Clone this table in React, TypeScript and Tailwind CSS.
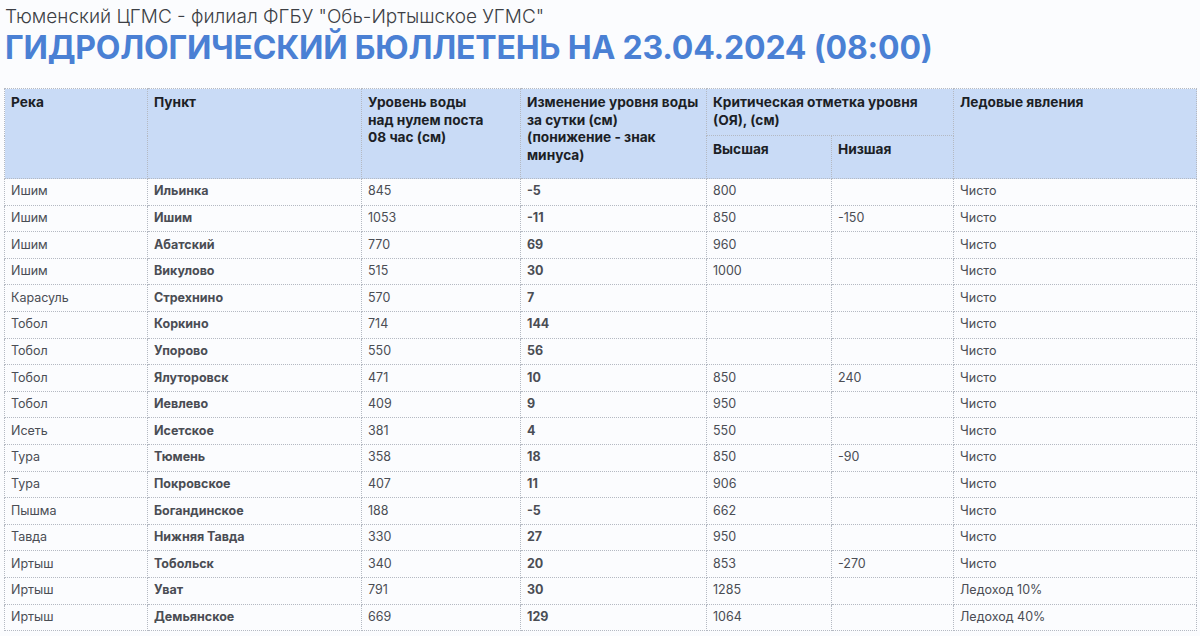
const rows: [string, string, string, string, string, string, string][] = [
  ["Ишим", "Ильинка", "845", "-5", "800", "", "Чисто"],
  ["Ишим", "Ишим", "1053", "-11", "850", "-150", "Чисто"],
  ["Ишим", "Абатский", "770", "69", "960", "", "Чисто"],
  ["Ишим", "Викулово", "515", "30", "1000", "", "Чисто"],
  ["Карасуль", "Стрехнино", "570", "7", "", "", "Чисто"],
  ["Тобол", "Коркино", "714", "144", "", "", "Чисто"],
  ["Тобол", "Упорово", "550", "56", "", "", "Чисто"],
  ["Тобол", "Ялуторовск", "471", "10", "850", "240", "Чисто"],
  ["Тобол", "Иевлево", "409", "9", "950", "", "Чисто"],
  ["Исеть", "Исетское", "381", "4", "550", "", "Чисто"],
  ["Тура", "Тюмень", "358", "18", "850", "-90", "Чисто"],
  ["Тура", "Покровское", "407", "11", "906", "", "Чисто"],
  ["Пышма", "Богандинское", "188", "-5", "662", "", "Чисто"],
  ["Тавда", "Нижняя Тавда", "330", "27", "950", "", "Чисто"],
  ["Иртыш", "Тобольск", "340", "20", "853", "-270", "Чисто"],
  ["Иртыш", "Уват", "791", "30", "1285", "", "Ледоход 10%"],
  ["Иртыш", "Демьянское", "669", "129", "1064", "", "Ледоход 40%"],
];

const th = "border border-dotted border-[#b4b9c2] px-[6px] pt-[5px] align-top text-left font-bold text-[13.7px] leading-[17.5px] text-[#1c1f26]";
const td = "border border-dotted border-[#b4b9c2] px-[6px] align-middle text-[12.5px] text-[#4a4d54]";

export default function App() {
  return (
    <div className="w-[1200px] h-[636px] overflow-hidden bg-[#fbfcfe] font-[Inter,sans-serif]">
      <div className="px-[5px] pt-[4px]">
        <div className="text-[19px] font-light leading-[26px] text-[#3c3f45]">
          Тюменский ЦГМС - филиал ФГБУ "Обь-Иртышское УГМС"
        </div>
        <h1 className="text-[32px] font-bold leading-[36px] tracking-[-0.2px] text-[#4a80d4]">
          ГИДРОЛОГИЧЕСКИЙ БЮЛЛЕТЕНЬ НА 23.04.2024 (08:00)
        </h1>
      </div>
      <div className="pl-[4px] pt-[22px]">
        <table className="w-[1192px] table-fixed border-collapse">
          <colgroup>
            <col className="w-[143px]" />
            <col className="w-[214px]" />
            <col className="w-[159px]" />
            <col className="w-[186px]" />
            <col className="w-[125px]" />
            <col className="w-[122px]" />
            <col className="w-[243px]" />
          </colgroup>
          <thead className="bg-[#c9dbf6]">
            <tr className="h-[47px]">
              <th rowSpan={2} className={th}>Река</th>
              <th rowSpan={2} className={th}>Пункт</th>
              <th rowSpan={2} className={th}>
                Уровень воды<br />над нулем поста<br />08 час (см)
              </th>
              <th rowSpan={2} className={th}>
                Изменение уровня воды<br />за сутки (см)<br />(понижение - знак<br />минуса)
              </th>
              <th colSpan={2} className={th}>
                Критическая отметка уровня<br />(ОЯ), (см)
              </th>
              <th rowSpan={2} className={th}>Ледовые явления</th>
            </tr>
            <tr className="h-[43px]">
              <th className={th}>Высшая</th>
              <th className={th}>Низшая</th>
            </tr>
          </thead>
          <tbody>
            {rows.map((r, i) => (
              <tr key={i} className="h-[26.6px]">
                <td className={td}>{r[0]}</td>
                <td className={td + " font-bold text-[#1c1f26]"}>{r[1]}</td>
                <td className={td}>{r[2]}</td>
                <td className={td + " font-bold text-[#1c1f26]"}>{r[3]}</td>
                <td className={td}>{r[4]}</td>
                <td className={td}>{r[5]}</td>
                <td className={td}>{r[6]}</td>
              </tr>
            ))}
          </tbody>
        </table>
      </div>
    </div>
  );
}
